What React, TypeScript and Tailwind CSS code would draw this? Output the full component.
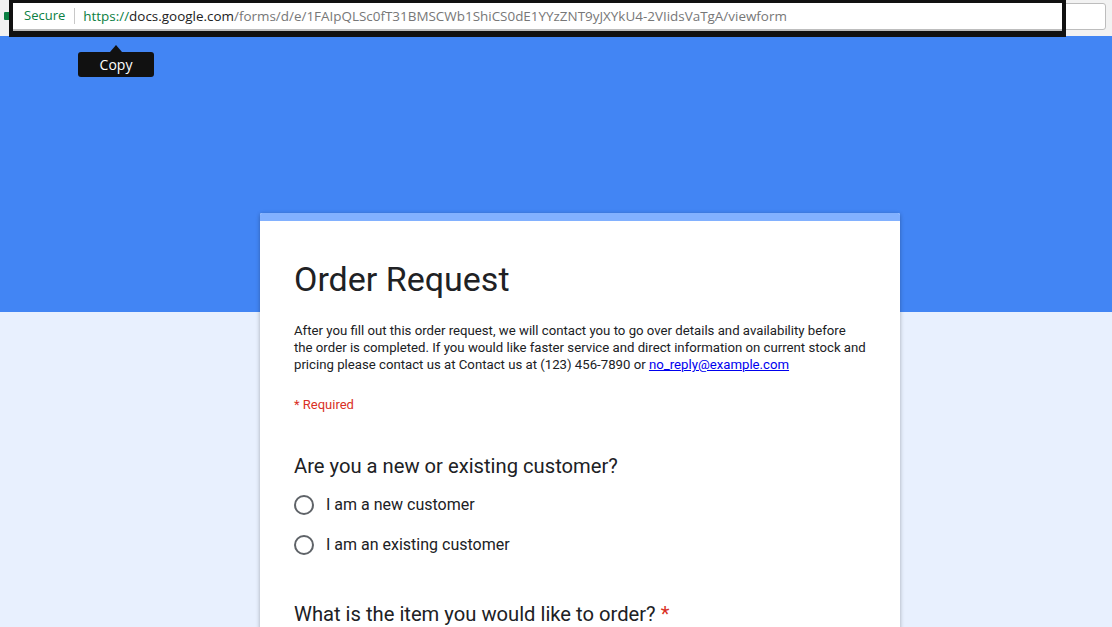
import React from "react";

export default function App() {
  return (
    <div className="w-[1112px] h-[627px] overflow-hidden relative bg-[#e8f0fe]" style={{ fontFamily: "Roboto, sans-serif" }}>
      {/* browser top strip */}
      <div className="h-[36px] bg-[#f2f2f2] relative">
        <div className="absolute left-[4px] top-[12px] w-[6px] h-[8px] bg-[#0b8043] rounded-[1px]" />
        <div className="absolute left-[10px] top-[3px] w-[1096px] h-[27px] bg-white border border-[#bdbdbd] rounded-[3px]" />
        <div className="absolute left-[9px] top-0 w-[1057px] h-[37px] border-x-[4px] border-t-[3px] border-b-[6px] border-[#111] bg-white flex items-center pb-[2px]" style={{ fontFamily: "'Open Sans', sans-serif" }}>
          <div className="absolute left-0 right-0 bottom-0 h-[2px] bg-[#bdbdbd]" />
          <span className="ml-[11px] text-[13px] text-[#0b8043]">Secure</span>
          <span className="ml-[9px] w-px h-[16px] bg-[#c8c8c8]" />
          <span className="ml-[8px] text-[13.45px] whitespace-nowrap">
            <span className="text-[#0b8043]">https://</span>
            <span className="text-[#222]">docs.google.com</span>
            <span className="text-[#777]">/forms/d/e/1FAIpQLSc0fT31BMSCWb1ShiCS0dE1YYzZNT9yJXYkU4-2VIidsVaTgA/viewform</span>
          </span>
        </div>
      </div>

      {/* blue header */}
      <div className="h-[276px] bg-[#4285f4]" />

      {/* tooltip */}
      <div className="absolute left-[78px] top-[45px] w-[76px] flex flex-col items-center">
        <div className="w-0 h-0 border-l-[6px] border-r-[6px] border-b-[7px] border-l-transparent border-r-transparent border-b-[#111]" />
        <div className="w-[76px] h-[25px] bg-[#111] rounded-[3px] text-white text-[14px] flex items-center justify-center" style={{ fontFamily: "'Open Sans', sans-serif" }}>
          Copy
        </div>
      </div>

      {/* card */}
      <div className="absolute left-[260px] top-[213px] w-[640px] h-[500px] bg-white rounded-t-[2px] shadow-[0_1px_4px_rgba(0,0,0,0.3)] overflow-hidden">
        <div className="h-[8px] bg-[#82b1ff]" />
        <div className="px-[34px] pt-[38px] text-[#202124]">
          <h1 className="text-[34px] leading-[40px] font-normal">Order Request</h1>
          <p className="mt-[23px] mr-[-10px] text-[13.2px] leading-[17px] whitespace-nowrap">
            After you fill out this order request, we will contact you to go over details and availability before
            <br />
            the order is completed. If you would like faster service and direct information on current stock and
            <br />
            pricing please contact us at Contact us at (123) 456-7890 or{" "}
            <a className="text-[#0000ee] underline">no_reply@example.com</a>
          </p>
          <div className="mt-[23px] text-[13px] leading-[17px] text-[#d93025]">* Required</div>
          <div className="mt-[41px] text-[20.2px] leading-[24px]">Are you a new or existing customer?</div>
          <div className="mt-[17px] flex flex-col gap-[20px]">
            <label className="flex items-center h-[20px]">
              <span className="w-[20px] h-[20px] rounded-full border-2 border-[#5f6368]" />
              <span className="ml-[12px] text-[16px]">I am a new customer</span>
            </label>
            <label className="flex items-center h-[20px]">
              <span className="w-[20px] h-[20px] rounded-full border-2 border-[#5f6368]" />
              <span className="ml-[12px] text-[16px]">I am an existing customer</span>
            </label>
          </div>
          <div className="mt-[47px] text-[20.2px] leading-[24px]">
            What is the item you would like to order? <span className="text-[#d93025]">*</span>
          </div>
        </div>
      </div>
    </div>
  );
}
